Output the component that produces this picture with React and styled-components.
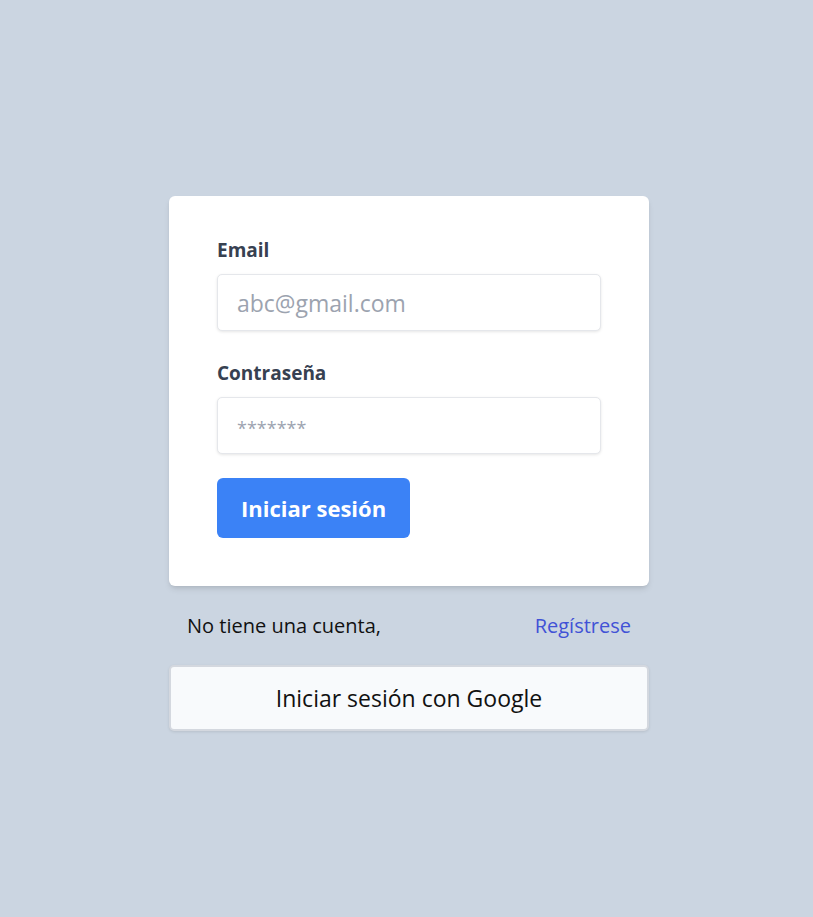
import React from "react";
import styled, { createGlobalStyle } from "styled-components";

const GlobalStyle = createGlobalStyle`
  body {
    margin: 0;
    background: #cbd5e1;
    font-family: "Open Sans", "Noto Sans", sans-serif;
  }
`;

const Page = styled.div`
  min-height: 100vh;
  display: flex;
  justify-content: center;
  padding: 196px 0 0 5px;
  box-sizing: border-box;
`;

const Column = styled.div`
  width: 480px;
  display: flex;
  flex-direction: column;
`;

const Card = styled.form`
  background: #fff;
  border-radius: 6px;
  box-shadow: 0 4px 6px -1px rgba(0, 0, 0, 0.1), 0 2px 4px -2px rgba(0, 0, 0, 0.1);
  padding: 40px 48px 48px;
  display: flex;
  flex-direction: column;
`;

const Label = styled.label`
  font-size: 19px;
  font-weight: 700;
  color: #374151;
  line-height: 28px;
  margin-bottom: 10px;
`;

const Input = styled.input`
  box-sizing: border-box;
  width: 100%;
  height: 57px;
  padding: 0 19px;
  border: 1px solid #e5e7eb;
  border-radius: 5px;
  box-shadow: 0 1px 3px rgba(0, 0, 0, 0.1);
  font-family: inherit;
  font-size: 23px;
  color: #374151;
  margin-bottom: ${p => p.$gap}px;
  outline: none;
  &::placeholder {
    color: #9ca3af;
    font-size: ${p => p.$hintSize || 23}px;
  }
`;

const Submit = styled.button`
  align-self: flex-start;
  height: 60px;
  padding: 0 24px;
  border: none;
  border-radius: 6px;
  background: #3b82f6;
  color: #fff;
  font-family: inherit;
  font-size: 22px;
  font-weight: 700;
  cursor: pointer;
`;

const SignupRow = styled.div`
  display: flex;
  justify-content: space-between;
  align-items: center;
  padding: 0 18px;
  height: 79px;
  font-size: 20px;
  color: #111;
`;

const Link = styled.a`
  color: #4152d6;
  text-decoration: none;
  cursor: pointer;
`;

const GoogleButton = styled.button`
  height: 66px;
  border: 2px solid #d4d8df;
  border-radius: 5px;
  background: #f8fafc;
  box-shadow: 0 1px 3px rgba(0, 0, 0, 0.1);
  font-family: inherit;
  font-size: 23px;
  color: #111;
  cursor: pointer;
`;

export default function App() {
  return (
    <>
      <GlobalStyle />
      <Page>
        <Column>
          <Card onSubmit={e => e.preventDefault()}>
            <Label htmlFor="email">Email</Label>
            <Input id="email" type="email" placeholder="abc@gmail.com" $gap={28} />
            <Label htmlFor="password">Contraseña</Label>
            <Input
              id="password"
              type="password"
              placeholder="*******"
              $gap={24}
              $hintSize={18}
            />
            <Submit type="submit">Iniciar sesión</Submit>
          </Card>
          <SignupRow>
            <span>No tiene una cuenta,</span>
            <Link>Regístrese</Link>
          </SignupRow>
          <GoogleButton type="button">Iniciar sesión con Google</GoogleButton>
        </Column>
      </Page>
    </>
  );
}
